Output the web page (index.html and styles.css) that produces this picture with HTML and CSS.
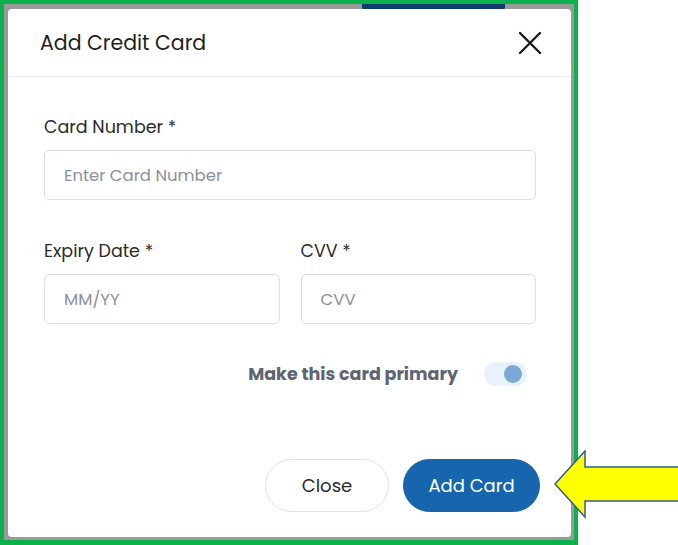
FILE: index.html
```html
<!DOCTYPE html>
<html>
    <head>
        <meta charset="UTF-8">
        <title>Add Credit Card</title>
        <link rel="stylesheet" href="styles.css">
    </head>
    <body>
        <div class="frame">
            <div class="backdrop">
                <span class="behind_tab"></span>
                <div class="modal">
                    <div class="modal_header">
                        <h2 class="modal_title">Add Credit Card</h2>
                        <button class="close_x" type="button" aria-label="Close">
                            <svg width="24" height="24" viewBox="0 0 24 24">
                                <path d="M2 2 L22 22 M22 2 L2 22" stroke="#1b1b1b" stroke-width="2.4" stroke-linecap="round"/>
                            </svg>
                        </button>
                    </div>
                    <form class="modal_body">
                        <div class="field">
                            <label for="card_no">Card Number *</label>
                            <input id="card_no" placeholder="Enter Card Number">
                        </div>
                        <div class="field_row">
                            <div class="field">
                                <label for="expiry">Expiry Date *</label>
                                <input id="expiry" placeholder="MM/YY">
                            </div>
                            <div class="field">
                                <label for="cvv">CVV *</label>
                                <input id="cvv" placeholder="CVV">
                            </div>
                        </div>
                        <div class="primary_row">
                            <span class="primary_text">Make this card primary</span>
                            <span class="toggle"><span class="knob"></span></span>
                        </div>
                        <div class="footer">
                            <button type="button" class="btn btn_close">Close</button>
                            <button type="submit" class="btn btn_add">Add Card</button>
                        </div>
                    </form>
                </div>
            </div>
        </div>
        <svg class="arrow" width="124" height="70" viewBox="0 0 124 70">
            <polygon points="1,34 31,1 31,17 130,17 130,51 31,51 31,67" fill="#ffff00" stroke="#2f5d8e" stroke-width="1.5"/>
        </svg>
    </body>
</html>
```

FILE: styles.css
```css
body {
    margin : 0;
    background : #fff;
    font-family : "Poppins", "Open Sans", sans-serif;
    color : #2b2b2b;
}
.frame {
    position : relative;
    width : 578px;
    height : 545px;
    box-sizing : border-box;
    border : 4px solid #0db14b;
    border-bottom-width : 5px;
}
.backdrop {
    position : relative;
    height : 100%;
    box-sizing : border-box;
    background : #9a9a9a;
    padding : 5px 3px 3px 4px;
}
.behind_tab {
    position : absolute;
    left : 358px;
    top : 0;
    width : 143px;
    height : 6px;
    background : #0f3b6e;
    border-radius : 0 0 3px 3px;
}
.modal {
    position : relative;
    height : 100%;
    background : #fff;
    border-radius : 4px;
    display : flex;
    flex-direction : column;
}
.modal_header {
    height : 68px;
    box-sizing : border-box;
    border-bottom : 1px solid #e6eaf2;
    display : flex;
    align-items : center;
    justify-content : space-between;
    padding : 0 28px 0 32px;
}
.modal_title {
    margin : 0;
    font-size : 20.5px;
    font-weight : 400;
    color : #1f1f1f;
}
.close_x {
    border : 0;
    background : none;
    padding : 0;
    width : 26px;
    height : 26px;
    display : flex;
    align-items : center;
    justify-content : center;
}
.modal_body {
    flex : 1;
    display : flex;
    flex-direction : column;
    padding : 37px 35px 25px 36px;
}
.field {
    display : flex;
    flex-direction : column;
}
.field label {
    font-size : 17.5px;
    line-height : 26px;
    color : #2b2b2b;
    margin-bottom : 10px;
}
.field input {
    width : 100%;
    min-width : 0;
    height : 50px;
    box-sizing : border-box;
    border : 1px solid #d9dee9;
    border-radius : 5px;
    padding : 0 19px;
    font-family : inherit;
    font-size : 16.5px;
    color : #333;
}
.field input::placeholder {
    color : #8b909b;
}
.field_row {
    display : flex;
    gap : 21px;
    margin-top : 38px;
}
.field_row .field {
    flex : 1;
    min-width : 0;
}
.primary_row {
    display : flex;
    align-items : center;
    justify-content : flex-end;
    gap : 26px;
    margin-top : 37px;
    padding-right : 9px;
}
.primary_text {
    font-size : 17.5px;
    font-weight : 700;
    color : #5e6571;
}
.toggle {
    width : 43px;
    height : 24px;
    border-radius : 12px;
    background : #e9f2fb;
    display : flex;
    align-items : center;
    justify-content : flex-end;
    padding-right : 5px;
    box-sizing : border-box;
}
.knob {
    width : 18px;
    height : 18px;
    border-radius : 50%;
    background : #7ba9d5;
}
.footer {
    margin-top : auto;
    display : flex;
    justify-content : flex-end;
    gap : 14px;
    margin-right : -4px;
}
.btn {
    height : 53px;
    border-radius : 27px;
    font-family : inherit;
    font-size : 18px;
}
.btn_close {
    width : 124px;
    background : #fff;
    border : 1px solid #dde2ea;
    color : #2b2b2b;
}
.btn_add {
    width : 137px;
    background : #1766ad;
    border : 1px solid #1766ad;
    color : #fff;
}
.arrow {
    position : absolute;
    left : 554px;
    top : 450px;
}
```
